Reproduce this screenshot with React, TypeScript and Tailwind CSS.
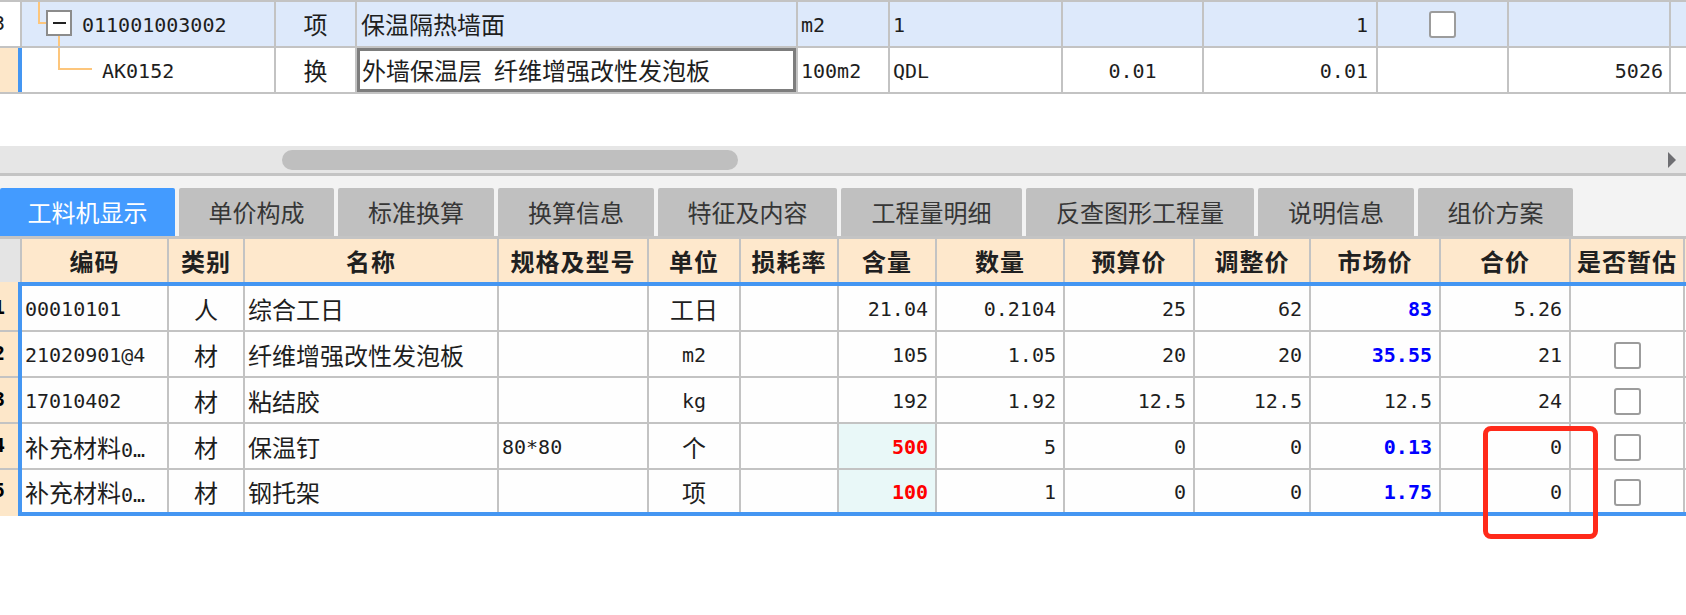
import React from "react";

const CJK_RE = /[\u2E80-\u9FFF\uFF00-\uFFEF\u3000-\u303F]/;
const SPLIT_RE = /[\u2E80-\u9FFF\uFF00-\uFFEF\u3000-\u303F]+|[^\u2E80-\u9FFF\uFF00-\uFFEF\u3000-\u303F]+/g;

function Txt({ s, className = "" }: { s: string; className?: string }) {
  const parts = s.match(SPLIT_RE) ?? [];
  return (
    <span className={"whitespace-pre leading-none " + className}>
      {parts.map((p, i) =>
        CJK_RE.test(p) ? (
          <span key={i} className="font-['Noto_Sans_CJK_SC',sans-serif] text-[24px]">
            {p}
          </span>
        ) : p === "…" ? (
          <span key={i} className="inline-block -translate-y-[6px] font-['DejaVu_Sans_Mono',monospace] text-[20px]">
            {p}
          </span>
        ) : (
          <span key={i} className="font-['DejaVu_Sans_Mono',monospace] text-[20px]">
            {p}
          </span>
        )
      )}
    </span>
  );
}

function Box() {
  return <div className="w-[27px] h-[27px] rounded-[3px] border-2 border-[#9c9c9c] bg-white" />;
}

const ORANGE = "#fdc67c";

function TreeTop() {
  return (
    <svg className="absolute left-0 top-0" width="80" height="44" viewBox="0 0 80 44">
      <rect x="16" y="0" width="2" height="22" fill={ORANGE} />
      <rect x="16" y="20" width="9" height="2" fill={ORANGE} />
      <rect x="36" y="34" width="2" height="10" fill={ORANGE} />
      <rect x="25" y="9" width="24" height="24" fill="#fff" stroke="#8c8c8c" strokeWidth="2" />
      <rect x="31" y="20" width="13" height="2" fill="#222" />
    </svg>
  );
}

function TreeBottom() {
  return (
    <svg className="absolute left-0 top-0" width="80" height="44" viewBox="0 0 80 44">
      <rect x="36" y="0" width="2" height="22" fill={ORANGE} />
      <rect x="36" y="20" width="34" height="2" fill={ORANGE} />
    </svg>
  );
}

const G = "border-[#c3c3c3]";

function TopTable() {
  return (
    <div className={"border-t-2 " + G}>
      {/* row 1 */}
      <div className={"flex h-[46px] border-b-2 " + G + " text-[#1e1e1e]"}>
        <div className={"w-[22px] shrink-0 bg-white border-r-2 overflow-hidden flex items-center " + G}>
          <span className="-ml-[7px]">
            <Txt s="3" />
          </span>
        </div>
        <div className={"w-[254px] shrink-0 bg-[#dde9fb] border-r-2 relative flex items-center pl-[60px] pt-[2px] " + G}>
          <TreeTop />
          <Txt s="011001003002" />
        </div>
        <div className={"w-[81px] shrink-0 bg-[#dde9fb] border-r-2 flex items-center justify-center " + G}>
          <Txt s="项" />
        </div>
        <div className={"w-[441px] shrink-0 bg-[#dde9fb] border-r-2 flex items-center pl-[4px] " + G}>
          <Txt s="保温隔热墙面" />
        </div>
        <div className={"w-[92px] shrink-0 bg-[#dde9fb] border-r-2 flex items-center pl-[3px] pt-[2px] " + G}>
          <Txt s="m2" />
        </div>
        <div className={"w-[173px] shrink-0 bg-[#dde9fb] border-r-2 flex items-center pl-[3px] pt-[2px] " + G}>
          <Txt s="1" />
        </div>
        <div className={"w-[141px] shrink-0 bg-[#dde9fb] border-r-2 " + G} />
        <div className={"w-[174px] shrink-0 bg-[#dde9fb] border-r-2 flex items-center justify-end pr-[8px] pt-[2px] " + G}>
          <Txt s="1" />
        </div>
        <div className={"w-[131px] shrink-0 bg-[#dde9fb] border-r-2 flex items-center justify-center " + G}>
          <Box />
        </div>
        <div className={"w-[162px] shrink-0 bg-[#dde9fb] border-r-2 " + G} />
        <div className="flex-1 bg-[#dde9fb]" />
      </div>
      {/* row 2 */}
      <div className={"flex h-[46px] border-b-2 " + G + " text-[#1e1e1e]"}>
        <div className="w-[18px] shrink-0 bg-[#fde7c9]" />
        <div className="w-[4px] shrink-0 bg-[#4496f2]" />
        <div className={"w-[254px] shrink-0 bg-white border-r-2 relative flex items-center pl-[80px] pt-[2px] " + G}>
          <TreeBottom />
          <Txt s="AK0152" />
        </div>
        <div className={"w-[81px] shrink-0 bg-white border-r-2 flex items-center justify-center " + G}>
          <Txt s="换" />
        </div>
        <div className={"w-[441px] shrink-0 bg-white border-r-2 flex items-center pl-[5px] shadow-[inset_0_0_0_3px_#7d7d7d] " + G}>
          <Txt s="外墙保温层 纤维增强改性发泡板" />
        </div>
        <div className={"w-[92px] shrink-0 bg-white border-r-2 flex items-center pl-[3px] pt-[2px] " + G}>
          <Txt s="100m2" />
        </div>
        <div className={"w-[173px] shrink-0 bg-white border-r-2 flex items-center pl-[3px] pt-[2px] " + G}>
          <Txt s="QDL" />
        </div>
        <div className={"w-[141px] shrink-0 bg-white border-r-2 flex items-center justify-center pt-[2px] " + G}>
          <Txt s="0.01" />
        </div>
        <div className={"w-[174px] shrink-0 bg-white border-r-2 flex items-center justify-end pr-[8px] pt-[2px] " + G}>
          <Txt s="0.01" />
        </div>
        <div className={"w-[131px] shrink-0 bg-white border-r-2 " + G} />
        <div className={"w-[162px] shrink-0 bg-white border-r-2 flex items-center justify-end pr-[6px] pt-[2px] " + G}>
          <Txt s="5026" />
        </div>
        <div className="flex-1 bg-white" />
      </div>
    </div>
  );
}

function ScrollBar() {
  return (
    <div className="mt-[52px] h-[30px] bg-[#e6e6e6] border-b-[3px] border-[#c4c4c4] flex items-center">
      <div className="ml-[282px] w-[456px] h-[20px] rounded-full bg-[#bfbfbf]" />
      <svg className="ml-auto mr-[10px]" width="8" height="16" viewBox="0 0 8 16">
        <polygon points="0,0 8,8 0,16" fill="#6e6e72" />
      </svg>
    </div>
  );
}

const TABS: { label: string; w: string }[] = [
  { label: "工料机显示", w: "w-[175px]" },
  { label: "单价构成", w: "w-[155px]" },
  { label: "标准换算", w: "w-[156px]" },
  { label: "换算信息", w: "w-[156px]" },
  { label: "特征及内容", w: "w-[179px]" },
  { label: "工程量明细", w: "w-[181px]" },
  { label: "反查图形工程量", w: "w-[228px]" },
  { label: "说明信息", w: "w-[156px]" },
  { label: "组价方案", w: "w-[155px]" },
];

function Tabs() {
  return (
    <div className="bg-[#f3f3f3] pt-[12px] border-b-[3px] border-[#c4c4c4]">
      <div className="flex gap-[4px] h-[48px]">
        {TABS.map((t, i) => (
          <div
            key={t.label}
            className={
              t.w +
              " shrink-0 rounded-t-[2px] flex items-center justify-center " +
              (i === 0 ? "bg-[#439bff] text-white" : "bg-[#c0c0c0] text-[#363636]")
            }
          >
            <span className="font-['Noto_Sans_CJK_SC',sans-serif] text-[24px] leading-none">{t.label}</span>
          </div>
        ))}
      </div>
    </div>
  );
}

type Col = { w: string; h: string; a: "l" | "c" | "r" };
const COLS: Col[] = [
  { w: "w-[147px]", h: "编码", a: "l" },
  { w: "w-[76px]", h: "类别", a: "c" },
  { w: "w-[254px]", h: "名称", a: "l" },
  { w: "w-[150px]", h: "规格及型号", a: "l" },
  { w: "w-[92px]", h: "单位", a: "c" },
  { w: "w-[98px]", h: "损耗率", a: "r" },
  { w: "w-[98px]", h: "含量", a: "r" },
  { w: "w-[128px]", h: "数量", a: "r" },
  { w: "w-[130px]", h: "预算价", a: "r" },
  { w: "w-[116px]", h: "调整价", a: "r" },
  { w: "w-[130px]", h: "市场价", a: "r" },
  { w: "w-[130px]", h: "合价", a: "r" },
  { w: "w-[114px]", h: "是否暂估", a: "c" },
];

type Val = { s: string; c?: "red" | "blue"; bg?: boolean } | "box" | "";
const ROWS: Val[][] = [
  [{ s: "00010101" }, { s: "人" }, { s: "综合工日" }, "", { s: "工日" }, "", { s: "21.04" }, { s: "0.2104" }, { s: "25" }, { s: "62" }, { s: "83", c: "blue" }, { s: "5.26" }, ""],
  [{ s: "21020901@4" }, { s: "材" }, { s: "纤维增强改性发泡板" }, "", { s: "m2" }, "", { s: "105" }, { s: "1.05" }, { s: "20" }, { s: "20" }, { s: "35.55", c: "blue" }, { s: "21" }, "box"],
  [{ s: "17010402" }, { s: "材" }, { s: "粘结胶" }, "", { s: "kg" }, "", { s: "192" }, { s: "1.92" }, { s: "12.5" }, { s: "12.5" }, { s: "12.5" }, { s: "24" }, "box"],
  [{ s: "补充材料0…" }, { s: "材" }, { s: "保温钉" }, { s: "80*80" }, { s: "个" }, "", { s: "500", c: "red", bg: true }, { s: "5" }, { s: "0" }, { s: "0" }, { s: "0.13", c: "blue" }, { s: "0" }, "box"],
  [{ s: "补充材料0…" }, { s: "材" }, { s: "钢托架" }, "", { s: "项" }, "", { s: "100", c: "red", bg: true }, { s: "1" }, { s: "0" }, { s: "0" }, { s: "1.75", c: "blue" }, { s: "0" }, "box"],
];

function BottomTable() {
  return (
    <div>
      {/* header */}
      <div className="flex h-[43px] bg-[#fee8cc]">
        <div className={"w-[22px] shrink-0 bg-[#e4e4e4] border-r-2 " + G} />
        {COLS.map((c) => (
          <div key={c.h} className={c.w + " shrink-0 border-r-2 flex items-center justify-center " + G}>
            <span className="font-['Noto_Sans_CJK_SC',sans-serif] text-[24px] font-bold leading-none text-[#202020] tracking-[1px]">
              {c.h}
            </span>
          </div>
        ))}
        <div className="flex-1" />
      </div>
      {/* blue top line */}
      <div className="flex h-[4px]">
        <div className="w-[18px] shrink-0 bg-[#fde7c9]" />
        <div className="flex-1 bg-[#4496f2]" />
      </div>
      {ROWS.map((row, ri) => {
        const last = ri === ROWS.length - 1;
        return (
          <div key={ri} className={"flex " + (last ? "h-[42px]" : "h-[46px]")}>
            <div
              className={
                "w-[18px] shrink-0 bg-[#fde7c9] overflow-hidden flex items-center " +
                (last ? "" : "border-b-2 " + G)
              }
            >
              <span className="-ml-[7px] font-bold">
                <Txt s={String(ri + 1)} />
              </span>
            </div>
            <div className="w-[4px] shrink-0 bg-[#4496f2]" />
            {COLS.map((c, ci) => {
              const v = row[ci];
              const align =
                c.a === "l"
                  ? "justify-start pl-[3px]"
                  : c.a === "c"
                  ? "justify-center"
                  : "justify-end pr-[7px]";
              let bg = "bg-[#fefefe]";
              let content: React.ReactNode = null;
              if (v === "box") {
                content = <Box />;
              } else if (v !== "") {
                if (v.bg) bg = "bg-[#e9f8f8]";
                const color =
                  v.c === "red"
                    ? "text-[#ff0000] font-bold"
                    : v.c === "blue"
                    ? "text-[#0000ff] font-bold"
                    : "text-[#1e1e1e]";
                content = <Txt s={v.s} className={color} />;
              }
              return (
                <div
                  key={ci}
                  className={
                    c.w +
                    " shrink-0 border-r-2 flex items-center pt-[2px] " +
                    align +
                    " " +
                    bg +
                    " " +
                    G +
                    (last ? "" : " border-b-2")
                  }
                >
                  {content}
                </div>
              );
            })}
            <div className={"flex-1 bg-[#fefefe] " + (last ? "" : "border-b-2 " + G)} />
          </div>
        );
      })}
      {/* blue bottom line */}
      <div className="flex h-[4px]">
        <div className="w-[18px] shrink-0 bg-[#fde7c9]" />
        <div className="flex-1 bg-[#4496f2]" />
      </div>
    </div>
  );
}

export default function App() {
  return (
    <div className="relative w-[1686px] h-[615px] overflow-hidden bg-white">
      <TopTable />
      <ScrollBar />
      <Tabs />
      <BottomTable />
      <div className="absolute left-[1483px] top-[426px] w-[115px] h-[113px] border-[5px] border-[#ff2a1a] rounded-[8px]" />
    </div>
  );
}
